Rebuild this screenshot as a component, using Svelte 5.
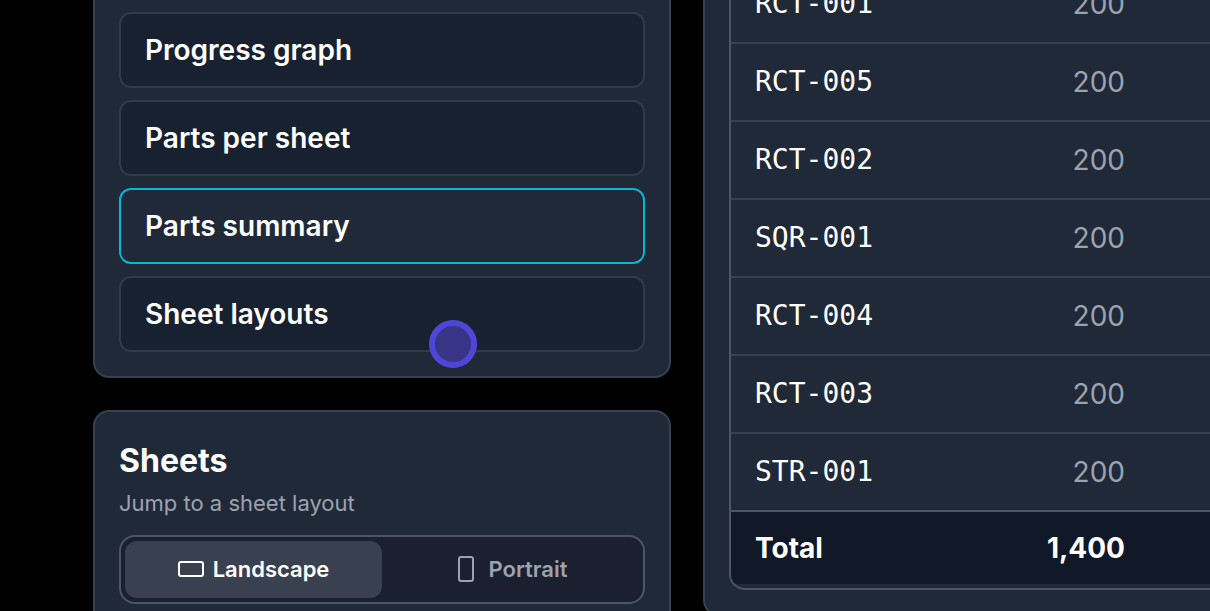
<script>
  const sections = ['Progress graph', 'Parts per sheet', 'Parts summary', 'Sheet layouts'];
  const parts = ['RCT-001', 'RCT-005', 'RCT-002', 'SQR-001', 'RCT-004', 'RCT-003', 'STR-001'].map(
    (name) => ({ name, quantity: 200 })
  );
  let current = $state('Parts summary');
  let orientation = $state('landscape');
  const total = parts.reduce((sum, part) => sum + part.quantity, 0).toLocaleString('en-US');
</script>

<div class="page">
  <aside>
    <nav class="card sections">
      {#each sections as section}
        <button class="section" class:current={section === current} onclick={() => (current = section)}>
          {section}
        </button>
      {/each}
    </nav>

    <section class="card sheets">
      <h2>Sheets</h2>
      <p>Jump to a sheet layout</p>
      <div class="toggle">
        <button class:active={orientation === 'landscape'} onclick={() => (orientation = 'landscape')}>
          <svg width="26" height="26" viewBox="0 0 26 26" aria-hidden="true">
            <rect x="1" y="6" width="24" height="14" rx="2" />
          </svg>
          Landscape
        </button>
        <button class:active={orientation === 'portrait'} onclick={() => (orientation = 'portrait')}>
          <svg width="26" height="26" viewBox="0 0 26 26" aria-hidden="true">
            <rect x="6" y="1" width="14" height="24" rx="2" />
          </svg>
          Portrait
        </button>
      </div>
    </section>
  </aside>

  <main class="card">
    <div class="frame">
      <table>
        <tbody>
          {#each parts as part}
            <tr>
              <td class="name">{part.name}</td>
              <td class="quantity">{part.quantity}</td>
            </tr>
          {/each}
        </tbody>
        <tfoot>
          <tr>
            <th scope="row">Total</th>
            <td class="quantity">{total}</td>
          </tr>
        </tfoot>
      </table>
    </div>
  </main>
  <span class="pointer"></span>
</div>

<style>
  :global(body) {
    margin: 0;
    background: #000;
  }

  .page {
    position: relative;
    box-sizing: border-box;
    height: 100vh;
    overflow: hidden;
    padding-left: 93px;
    display: grid;
    grid-template-columns: minmax(0, 578px) minmax(0, 1fr);
    align-items: start;
    gap: 32px;
    font-family: Inter, sans-serif;
    color: #fff;
  }

  .card {
    box-sizing: border-box;
    padding: 24px;
    background: #202937;
    border: 2px solid #374151;
    border-radius: 16px;
  }

  aside {
    display: flex;
    flex-direction: column;
    gap: 32px;
  }

  button {
    margin: 0;
    font-family: inherit;
    color: inherit;
    cursor: pointer;
  }

  .sections {
    display: flex;
    flex-direction: column;
    gap: 12px;
    padding-top: 12px;
    border-top: 0;
    border-top-left-radius: 0;
    border-top-right-radius: 0;
  }

  .section {
    height: 76px;
    padding: 0 24px;
    text-align: left;
    font-size: 28px;
    font-weight: 600;
    background: #18212f;
    border: 2px solid #313a48;
    border-radius: 12px;
  }

  .section.current {
    background: #202937;
    border-color: #06b6d4;
  }

  h2 {
    margin: 6px 0 8px;
    font-size: 32px;
    line-height: 38px;
    font-weight: 700;
  }

  p {
    margin: 0 0 17px;
    font-size: 22px;
    line-height: 30px;
    color: #9ca3af;
  }

  .toggle {
    display: grid;
    grid-template-columns: 1fr 1fr;
    padding: 4px;
    background: #1a202f;
    border: 2px solid #4b5563;
    border-radius: 16px;
  }

  .toggle button {
    height: 57px;
    display: flex;
    align-items: center;
    justify-content: center;
    gap: 9px;
    padding: 0 0 2px;
    font-size: 22px;
    font-weight: 600;
    color: #9ca3af;
    background: none;
    border: 0;
    border-radius: 12px;
  }

  .toggle button.active {
    color: #fff;
    background: #394150;
  }

  svg {
    fill: none;
    stroke: currentColor;
    stroke-width: 2;
  }

  /* The results list is scrolled part of the way through its first row. */
  main.card {
    margin-top: -36px;
    padding: 0 0 24px 24px;
    border-top: 0;
    border-right: 0;
    border-radius: 0 0 0 16px;
  }

  .frame {
    overflow: hidden;
    padding-bottom: 4px;
    border: 2px solid #4b5563;
    border-width: 2px 0 2px 2px;
    border-radius: 0 0 0 16px;
  }

  table {
    width: 100%;
    border-spacing: 0;
    font-size: 28px;
  }

  td,
  th {
    box-sizing: border-box;
    height: 78px;
    padding: 0 24px;
    text-align: left;
    border-bottom: 2px solid #374151;
  }

  tbody tr:last-child td {
    border-color: #4b5563;
  }

  td.name {
    padding-bottom: 2px;
    font-family: 'DejaVu Sans Mono', monospace;
  }

  td.quantity {
    padding-right: 85px;
    text-align: right;
    color: #9ca3af;
  }

  tfoot th,
  tfoot td.quantity {
    height: 72px;
    font-weight: 700;
    color: #fff;
    background: #111827;
    border: 0;
  }

  .pointer {
    position: absolute;
    left: 429px;
    top: 320px;
    box-sizing: border-box;
    width: 48px;
    height: 48px;
    border: 6px solid #4f46d8;
    border-radius: 50%;
    background: #383586;
    pointer-events: none;
  }
</style>
